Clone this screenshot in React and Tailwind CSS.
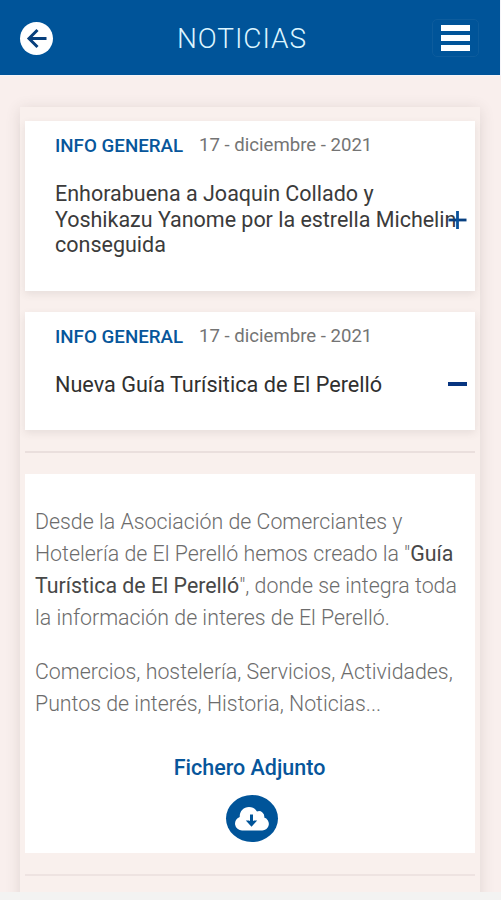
function Header() {
  return (
    <header className="flex h-[75px] w-[500px] items-center justify-between bg-[#005499] pt-[1px] pr-[21px] pl-[20px]">
      <button aria-label="Volver" className="flex size-[33px] items-center justify-center rounded-full bg-white">
        <svg width="33" height="33" viewBox="0 0 33 33" fill="none" stroke="#073f7c" strokeWidth="3">
          <path d="M26.500 16.500H9M17.500 8L9 16.500l8.500 8.500" />
        </svg>
      </button>
      <h1 className="pt-[1px] pr-[1px] text-[28px] leading-[38px] font-light tracking-[0.900px] text-[#dcf5ff]">NOTICIAS</h1>
      <button aria-label="Menú" className="flex h-[38px] w-[47px] flex-col items-center justify-center gap-[4px] rounded-[5px] border border-[#0d5c9d]">
        <span className="h-[6px] w-[29px] bg-white" />
        <span className="h-[6px] w-[29px] bg-white" />
        <span className="h-[6px] w-[29px] bg-white" />
      </button>
    </header>
  );
}

function Meta() {
  return (
    <div className="flex h-[26px] items-center gap-[16px] whitespace-nowrap text-[18.600px]">
      <span className="w-[128px] text-[18.750px] font-medium text-[#07569b]">INFO GENERAL</span>
      <span className="text-[#747474]">17 - diciembre - 2021</span>
    </div>
  );
}

function CloudDownload() {
  return (
    <svg width="34" height="25" viewBox="0 0 34 25" className="ml-[-1px]">
      <path
        fill="#fff"
        d="M7 24.500a7 7 0 0 1-2.300-13.600C4.500 5.200 8.600 1 14 1c3.500 0 6.400 1.800 8 4.500a5.400 5.400 0 0 1 7.200 6.100A6.600 6.600 0 0 1 27 24.500z"
      />
      <path fill="none" stroke="#005499" strokeWidth="3" d="M16.500 8.500v9" />
      <path fill="#005499" d="M10.800 14.500h3.200l2.500 1.500 2.500-1.500h3.200l-5.700 6.200z" />
    </svg>
  );
}

export default function App() {
  return (
    <div className="h-[900px] w-[501px] overflow-hidden bg-[#f9efed] font-[Roboto,sans-serif]">
      <div className="bg-[#f5f4f8]">
        <Header />
      </div>
      <div className="h-[817px] overflow-hidden border-t border-[#f5f4f8] pr-[21px] pl-[20px] pt-[31px]">
        <main className="h-[850px] bg-[#f9f0ed] px-[5px] pt-[14px] shadow-[0_2px_14px_rgba(70,65,60,0.14)]">
          <article className="relative h-[170px] bg-white pt-[12px] pl-[30px] shadow-[0_3px_8px_rgba(70,60,55,0.10)]">
            <Meta />
            <h2 className="mt-[22px] text-[21.500px] leading-[25.500px] whitespace-pre text-[#3b3b3b]">
              <span className="block">Enhorabuena a Joaquin Collado y</span>
              <span className="block tracking-[-0.020px]">Yoshikazu Yanome por la estrella Michelin</span>
              <span className="block">conseguida</span>
            </h2>
            <svg className="absolute top-[89px] right-[8px]" width="19" height="20" viewBox="0 0 19 20" stroke="#07509a">
              <path d="M0.500 10h18" stroke="#073f80" strokeWidth="2.800" />
              <path d="M9.500 1v18" strokeWidth="2.800" />
            </svg>
          </article>
          <article className="relative mt-[21px] h-[118px] bg-white pt-[12px] pl-[30px] shadow-[0_3px_8px_rgba(70,60,55,0.10)]">
            <Meta />
            <h2 className="mt-[22px] text-[21.650px] leading-[25.500px] whitespace-pre text-[#303030]">Nueva Guía Turísitica de El Perelló</h2>
            <span className="absolute top-[70px] right-[8px] h-[4px] w-[19px] bg-[#073580]" />
          </article>
          <hr className="mt-[21px] border-t-2 border-[#eadfdd]" />
          <section className="mt-[21px] h-[379px] bg-white pt-[32px] pl-[10px] text-[21.350px] leading-[32px] font-light whitespace-pre text-[#6c6c6c]">
            <p>
              <span className="block">Desde la Asociación de Comerciantes y</span>
              <span className="block">Hotelería de El Perelló hemos creado la "<b className="font-normal text-[#484848]">Guía</b></span>
              <span className="block"><b className="font-normal text-[#484848]">Turística de El Perelló</b>", donde se integra toda</span>
              <span className="block">la información de interes de El Perelló.</span>
            </p>
            <p className="mt-[22px]">
              <span className="block">Comercios, hostelería, Servicios, Actividades,</span>
              <span className="block">Puntos de interés, Historia, Noticias...</span>
            </p>
            <div className="mt-[32px] flex flex-col items-center pr-[11px]">
              <span className="text-[21.500px] font-medium text-[#07569b]">Fichero Adjunto</span>
              <button aria-label="Descargar" className="mt-[11px] ml-[5px] flex h-[47px] w-[52px] items-center justify-center rounded-[50%] bg-[#005499]">
                <CloudDownload />
              </button>
            </div>
          </section>
          <hr className="mt-[21px] border-t-2 border-[#eee3e1]" />
        </main>
      </div>
      <div className="h-[8px] bg-[#f3f3f2]" />
    </div>
  );
}
